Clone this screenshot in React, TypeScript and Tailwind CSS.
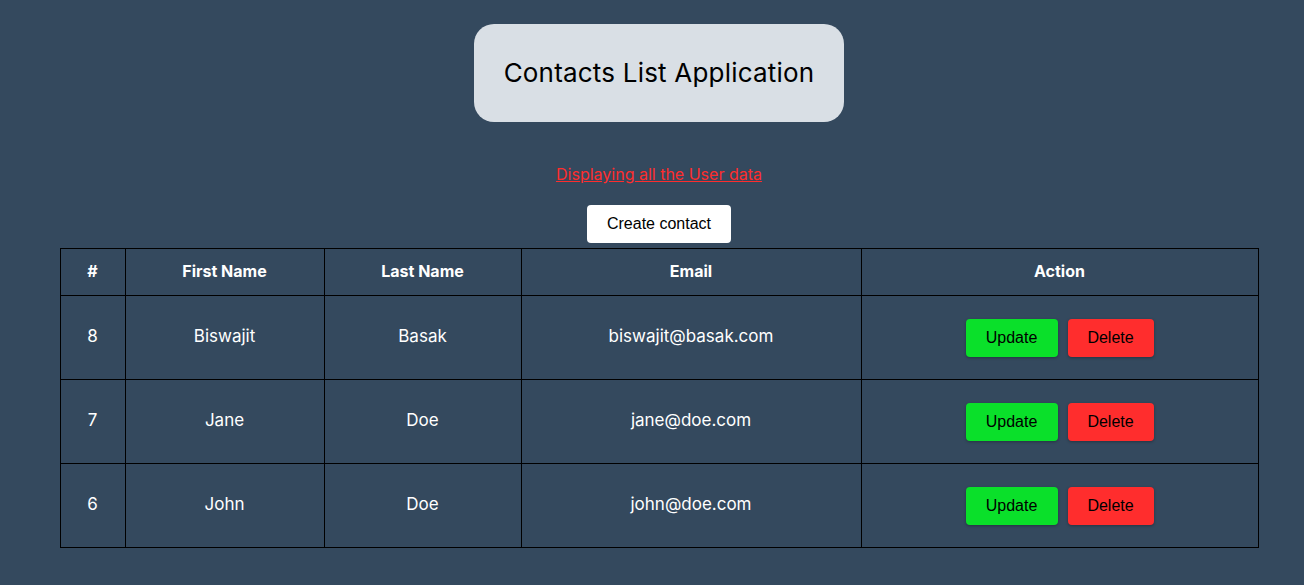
import React from "react";

type Contact = {
  id: number;
  firstName: string;
  lastName: string;
  email: string;
};

const contacts: Contact[] = [
  { id: 8, firstName: "Biswajit", lastName: "Basak", email: "biswajit@basak.com" },
  { id: 7, firstName: "Jane", lastName: "Doe", email: "jane@doe.com" },
  { id: 6, firstName: "John", lastName: "Doe", email: "john@doe.com" }
];

const cell = "border border-black text-center align-middle";

export default function App() {
  return (
    <div className="min-h-[585px] bg-[#34495e] pl-[14px] pt-6 font-['Inter','Noto_Sans',sans-serif] text-white">
      <div className="flex justify-center">
        <h1 className="flex h-[98px] w-[370px] items-center justify-center rounded-[20px] bg-[#d9dfe5] pb-[2px] text-[26px] font-normal tracking-[0.2px] text-black">
          Contacts List Application
        </h1>
      </div>

      <p className="mt-[42px] text-center text-base leading-5 text-[#ff2d2d] underline">
        Displaying all the User data
      </p>

      <div className="mt-[21px] flex justify-center">
        <button
          type="button"
          className="h-[38px] w-[144px] rounded-[4px] bg-white font-['Liberation_Sans',Arial,sans-serif] text-base text-black"
        >
          Create contact
        </button>
      </div>

      <table className="mx-auto mt-[5px] w-[1199px] border-collapse border border-black">
        <thead>
          <tr className="h-[47px] text-base font-extrabold">
            <th className={`${cell} w-[65px] pb-[2px]`}>#</th>
            <th className={`${cell} w-[199px] pb-[2px]`}>First Name</th>
            <th className={`${cell} w-[197px] pb-[2px]`}>Last Name</th>
            <th className={`${cell} w-[340px] pb-[2px]`}>Email</th>
            <th className={`${cell} pb-[2px]`}>Action</th>
          </tr>
        </thead>
        <tbody>
          {contacts.map((contact) => (
            <tr key={contact.id} className="h-[84px] text-[17px]">
              <td className={`${cell} pb-[2px]`}>{contact.id}</td>
              <td className={`${cell} pb-[2px]`}>{contact.firstName}</td>
              <td className={`${cell} pb-[2px]`}>{contact.lastName}</td>
              <td className={`${cell} pb-[2px]`}>{contact.email}</td>
              <td className={cell}>
                <div className="flex justify-center gap-[10px] font-['Liberation_Sans',Arial,sans-serif] text-base text-black">
                  <button
                    type="button"
                    className="h-[38px] w-[92px] rounded-[4px] bg-[#0ae02a] shadow-[0_1px_3px_rgba(0,0,0,0.3)]"
                  >
                    Update
                  </button>
                  <button
                    type="button"
                    className="h-[38px] w-[86px] rounded-[4px] bg-[#ff2d2d] shadow-[0_1px_3px_rgba(0,0,0,0.3)]"
                  >
                    Delete
                  </button>
                </div>
              </td>
            </tr>
          ))}
        </tbody>
      </table>
    </div>
  );
}
